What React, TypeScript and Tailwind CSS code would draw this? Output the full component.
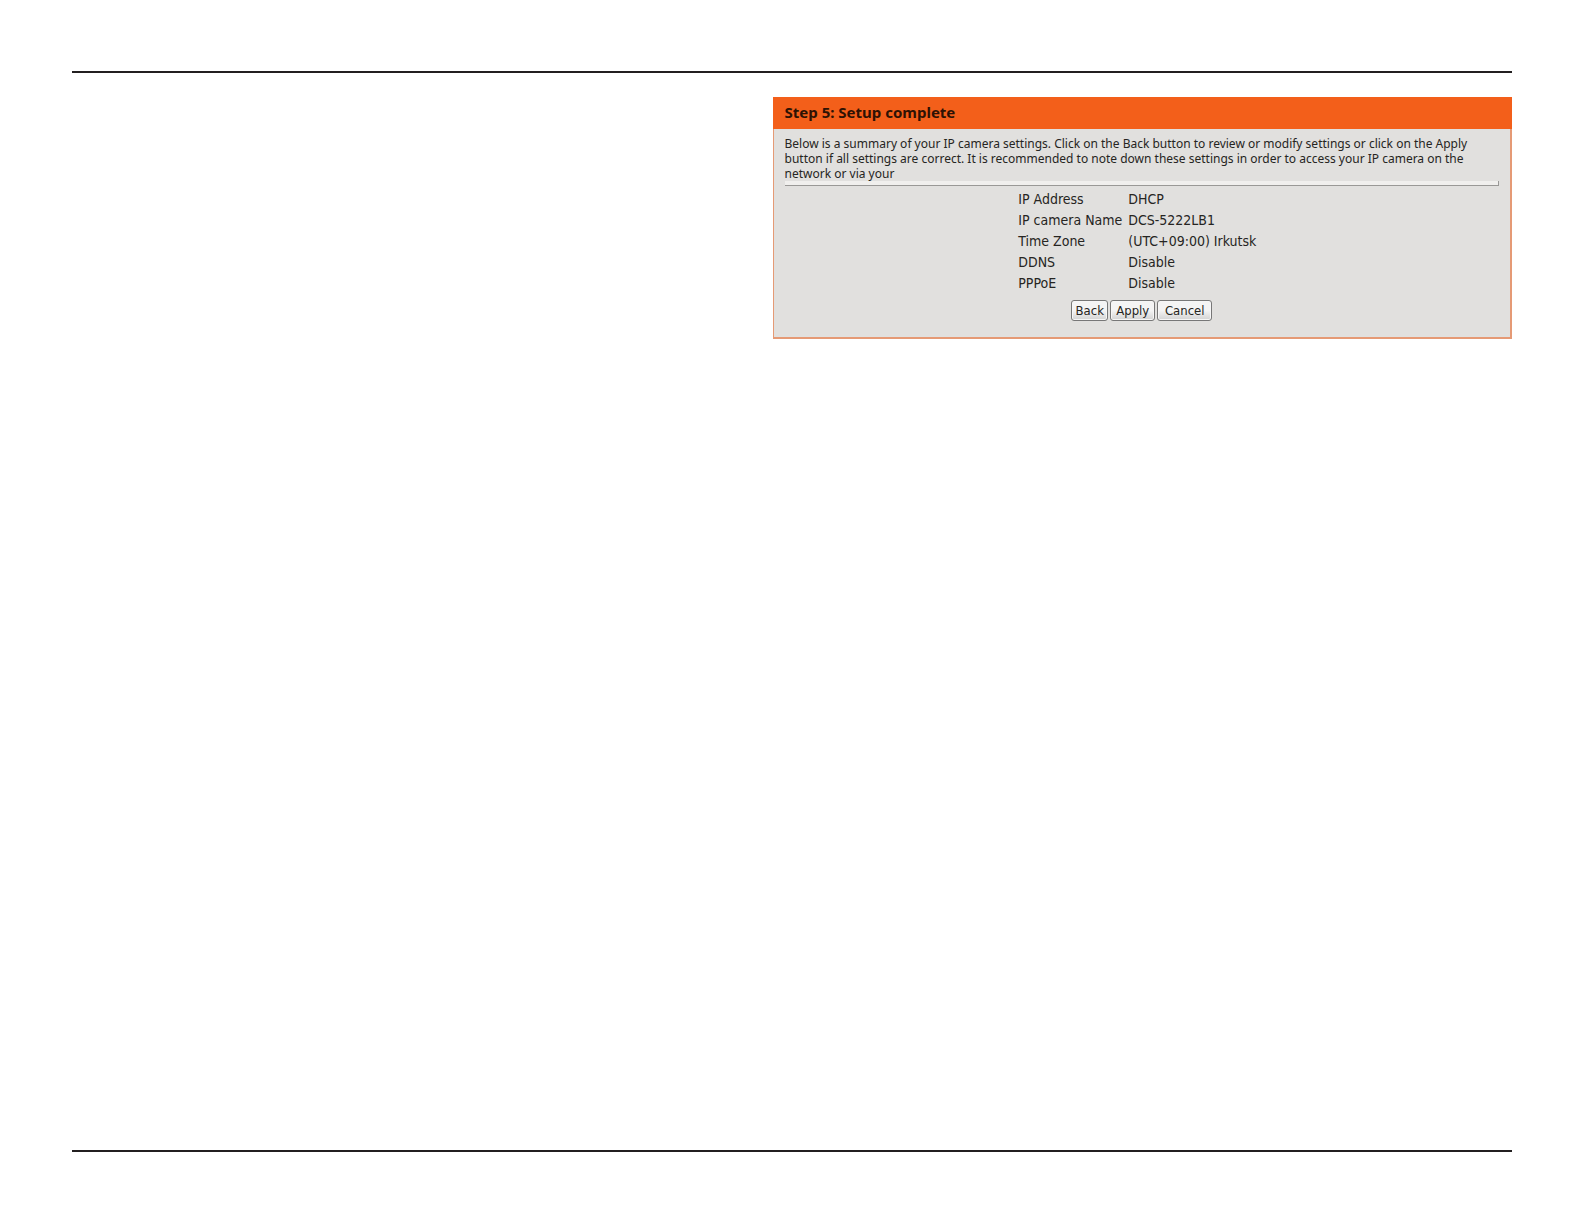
import React from 'react';

interface Setting {
  label: string;
  value: string;
}

const settings: Setting[] = [
  { label: 'IP Address', value: 'DHCP' },
  { label: 'IP camera Name', value: 'DCS-5222LB1' },
  { label: 'Time Zone', value: '(UTC+09:00) Irkutsk' },
  { label: 'DDNS', value: 'Disable' },
  { label: 'PPPoE', value: 'Disable' },
];

const WizardButton: React.FC<{ children: React.ReactNode; className: string }> = ({ children, className }) => (
  <button
    type="button"
    className={`h-[21px] rounded-[3px] border border-[#777777] bg-linear-to-b from-[#f4f4f4] from-50% to-[#d2d2d2] text-[13px] leading-[17px] inset-ring inset-ring-[#f6f6f6] ${className}`}
  >
    {children}
  </button>
);

const App: React.FC = () => {
  return (
    <div className="flex min-h-screen flex-col bg-white px-18 pt-[71px] pb-18 font-['DejaVu_Sans_Condensed','Noto_Sans',sans-serif] text-[#262522]">
      <hr className="border-t-2 border-[#231f20]" />

      <main className="grid flex-1 grid-cols-[18fr_19fr] items-start pt-6">
        {/* Setup wizard panel */}
        <section className="col-start-2">
          <h1 className="bg-[#f35f1a] px-3 pb-0.5 font-['Noto_Sans',sans-serif] text-[15px] leading-[30px] font-bold text-[#2e1204]">
            Step 5: Setup complete
          </h1>

          <div className="border-r-2 border-b-2 border-l border-[#e59a75] bg-[#e1e0de] px-[11px] pt-[7px] pb-4">
            <p className="font-['Noto_Sans',sans-serif] text-[12px] leading-[15px]">
              Below is a summary of your IP camera settings. Click on the Back button to review or modify settings or click on the Apply
              <br />
              button if all settings are correct. It is recommended to note down these settings in order to access your IP camera on the
              <br />
              network or via your
            </p>
            <div className="h-[5px] border-r border-b border-[#999896] bg-[#f0efed]" />

            <table className="mx-auto mt-[3px] w-[247px] text-[14px] leading-[21px]">
              <tbody>
                {settings.map((setting) => (
                  <tr key={setting.label}>
                    <th scope="row" className="w-[110px] p-0 text-left font-normal whitespace-nowrap">
                      {setting.label}
                    </th>
                    <td className="p-0 whitespace-nowrap">{setting.value}</td>
                  </tr>
                ))}
              </tbody>
            </table>

            <div className="mt-[6px] flex justify-center gap-[2px]">
              <WizardButton className="w-[37px]">Back</WizardButton>
              <WizardButton className="w-[45px]">Apply</WizardButton>
              <WizardButton className="w-[55px]">Cancel</WizardButton>
            </div>
          </div>
        </section>
      </main>

      <hr className="border-t-2 border-[#231f20]" />
    </div>
  );
};

export default App;
